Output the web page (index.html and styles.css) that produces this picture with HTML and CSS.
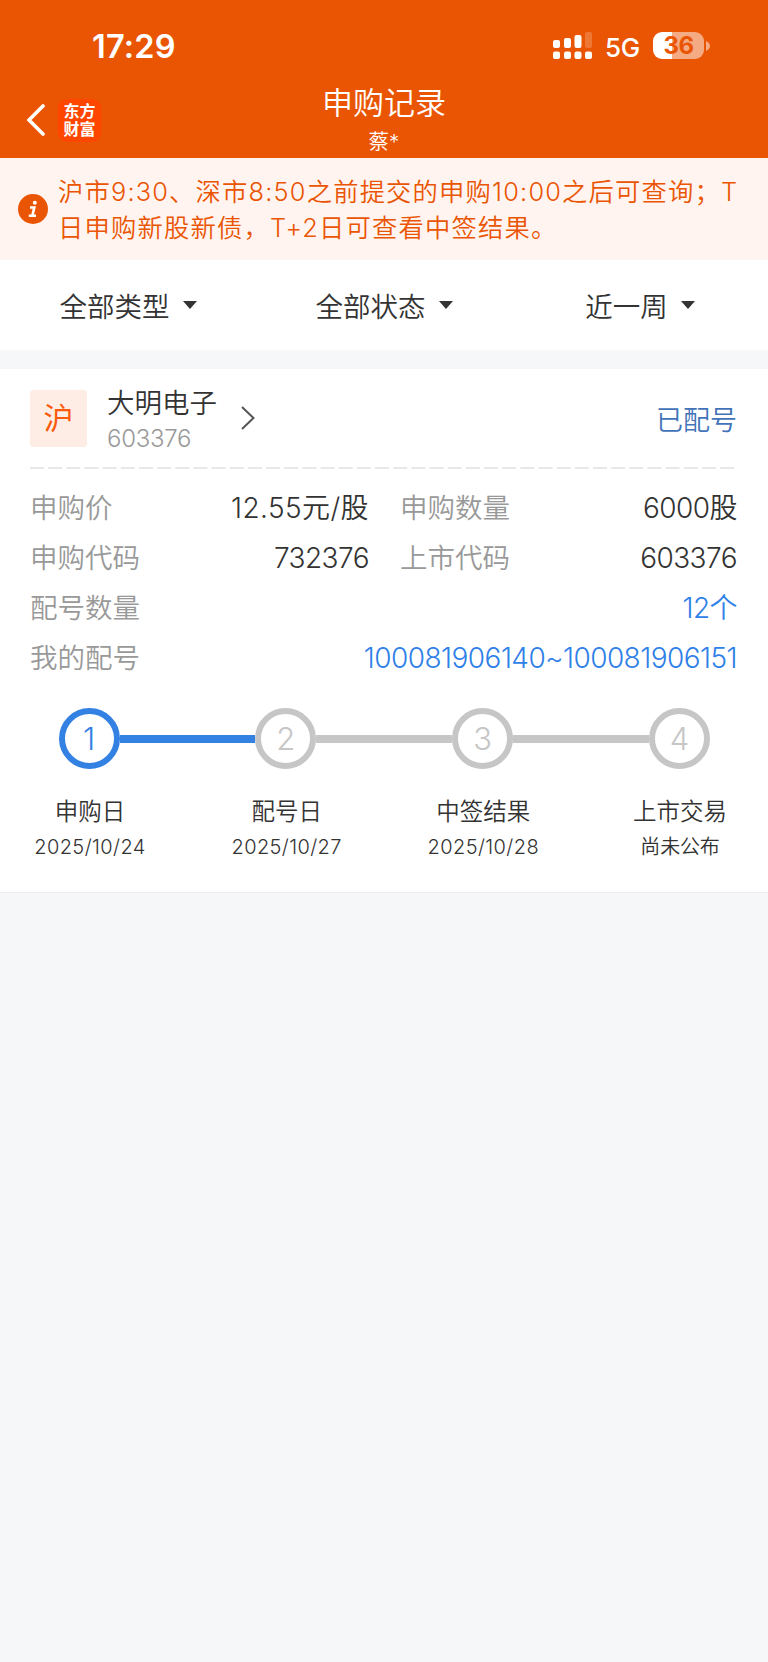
FILE: index.html
```html
<!DOCTYPE html>
<html lang="zh-CN">
<head>
  <meta charset="UTF-8" />
  <meta name="viewport" content="width=device-width, initial-scale=1.0"/>
  <title>申购记录</title>
  <link rel="stylesheet" href="styles.css">
</head>
<body>

  <header class="header">
    <div class="status-bar">
      <span class="clock">17:29</span>
      <div class="status-icons">
        <svg class="signal" width="40" height="28" viewBox="0 0 40 28" fill="#fff">
          <rect x="0" y="8" width="7" height="8" rx="2"/>
          <rect x="11" y="6" width="7" height="10" rx="2"/>
          <rect x="21.5" y="3" width="7" height="13" rx="2"/>
          <rect x="32" y="0" width="7" height="16" rx="2" opacity="0.2"/>
          <rect x="0" y="19.5" width="7" height="7.5" rx="2"/>
          <rect x="11" y="19.5" width="7" height="7.5" rx="2"/>
          <rect x="21.5" y="19.5" width="7" height="7.5" rx="2"/>
          <rect x="32" y="19.5" width="7" height="7.5" rx="2"/>
        </svg>
        <span class="network">5G</span>
        <div class="battery"><span>36</span></div>
        <svg class="battery-tip" width="4" height="10" viewBox="0 0 4 10" fill="#fff" opacity="0.5"><path d="M0 0 Q4 2 4 5 Q4 8 0 10Z"/></svg>
      </div>
    </div>
    <div class="nav">
      <div class="nav-left">
        <svg width="18" height="32" viewBox="0 0 18 32" fill="none" stroke="#fff" stroke-width="3.6" stroke-linecap="round"><path d="M16 2 L2 16 L16 30"/></svg>
        <div class="logo">东方<br>财富</div>
      </div>
      <div class="nav-title">
        <h1>申购记录</h1>
        <p>蔡*</p>
      </div>
    </div>
  </header>

  <div class="notice">
    <svg class="info" width="30" height="30" viewBox="0 0 30 30">
      <circle cx="15" cy="15" r="15" fill="#ea5504"/>
      <circle cx="16.8" cy="8.8" r="2" fill="#fff"/>
      <path d="M12 13.5 H16.3 L14.3 21.7 M10.8 21.7 H18" fill="none" stroke="#fff" stroke-width="2.6"/>
    </svg>
    <p>沪市9:30、深市8:50之前提交的申购10:00之后可查询；T<br>日申购新股新债，T+2日可查看中签结果。</p>
  </div>

  <div class="filters">
    <div class="filter">全部类型<i class="caret"></i></div>
    <div class="filter">全部状态<i class="caret"></i></div>
    <div class="filter">近一周<i class="caret"></i></div>
  </div>

  <main class="card">
    <div class="stock">
      <div class="market">沪</div>
      <div class="stock-name">
        <h2>大明电子</h2>
        <p>603376</p>
      </div>
      <svg class="arrow" width="14" height="24" viewBox="0 0 14 24" fill="none" stroke="#555" stroke-width="2"><path d="M1 1 L12.5 12 L1 23"/></svg>
      <span class="state">已配号</span>
    </div>

    <svg class="divider" width="706" height="2"><line x1="0" y1="1" x2="706" y2="1" stroke="#e8e8e8" stroke-width="2" stroke-dasharray="14 4.16"/></svg>

    <div class="details">
      <div class="cell"><span class="label">申购价</span><span class="value price">12.55元/股</span></div>
      <div class="cell"><span class="label">申购数量</span><span class="value">6000股</span></div>
      <div class="cell"><span class="label">申购代码</span><span class="value">732376</span></div>
      <div class="cell"><span class="label">上市代码</span><span class="value">603376</span></div>
      <div class="cell wide"><span class="label">配号数量</span><span class="value blue">12个</span></div>
      <div class="cell wide"><span class="label">我的配号</span><span class="value blue">100081906140~100081906151</span></div>
    </div>

    <div class="steps">
      <span class="dot active">1</span>
      <span class="line active"></span>
      <span class="dot">2</span>
      <span class="line"></span>
      <span class="dot">3</span>
      <span class="line"></span>
      <span class="dot">4</span>
    </div>
    <div class="step-labels">
      <div class="step-label"><h3>申购日</h3><p>2025/10/24</p></div>
      <div class="step-label"><h3>配号日</h3><p>2025/10/27</p></div>
      <div class="step-label"><h3>中签结果</h3><p>2025/10/28</p></div>
      <div class="step-label"><h3>上市交易</h3><p class="pending">尚未公布</p></div>
    </div>
  </main>

</body>
</html>
```
FILE: styles.css
```css
* {
  box-sizing: border-box;
}

body {
  margin: 0;
  min-height: 100vh;
  background: #f6f7f9;
  color: #333;
  font-family: Inter, "Noto Sans CJK SC", sans-serif;
  font-weight: 350;
}

h1, h2, h3, p {
  margin: 0;
  font-weight: inherit;
}

svg {
  display: block;
  flex-shrink: 0;
}

.header {
  height: 158px;
  background: #ea5504;
  color: #fff;
}

.status-bar {
  height: 82px;
  padding: 11px 58px 0 92px;
  display: flex;
  align-items: center;
  justify-content: space-between;
}

.clock {
  font-size: 32.5px;
  font-weight: 600;
  line-height: 40px;
  letter-spacing: 0.2px;
}

.status-icons {
  display: flex;
  align-items: center;
  margin-top: -11px;
}

.signal {
  margin-top: 10px;
}

.network {
  margin: 13px 0 0 12px;
  width: 48px;
  font-size: 26px;
  font-weight: 450;
  line-height: 30px;
  letter-spacing: -0.2px;
}

.battery {
  width: 51px;
  height: 27px;
  margin-top: 9px;
  border-radius: 9px;
  background: linear-gradient(to right, #fff 19px, rgba(255, 255, 255, 0.5) 19px);
  color: #ea5504;
  font-size: 24px;
  font-weight: 700;
  line-height: 27px;
  text-align: center;
  letter-spacing: -0.5px;
}

.battery-tip {
  margin: 9px 0 0 2px;
}

.nav {
  display: grid;
  grid-template-columns: 1fr 200px 1fr;
  height: 76px;
}

.nav-left {
  display: flex;
  align-items: center;
  gap: 13px;
  padding: 0 0 2px 27px;
}

.logo {
  width: 43px;
  height: 43px;
  padding-top: 3px;
  border-radius: 9px;
  background: #ff4600;
  font-size: 16px;
  font-weight: 700;
  line-height: 18px;
  text-align: center;
}

.nav-title {
  padding-top: 1px;
  text-align: center;
}

.nav-title h1 {
  font-size: 31px;
  line-height: 40px;
}

.nav-title p {
  font-size: 20.5px;
  line-height: 37px;
}

.notice {
  height: 102px;
  padding-left: 18px;
  display: flex;
  align-items: center;
  gap: 10px;
  background: #fff4ef;
  color: #ea5504;
}

.notice p {
  padding-top: 1px;
  font-size: 25.3px;
  line-height: 36px;
  letter-spacing: 1.2px;
  white-space: nowrap;
}

.filters {
  height: 90px;
  padding-bottom: 1px;
  display: grid;
  grid-template-columns: repeat(3, 1fr);
  background: #fff;
}

.filter {
  display: flex;
  align-items: center;
  justify-content: center;
  gap: 13px;
  font-size: 27.5px;
}

.caret {
  border: 7px solid transparent;
  border-top: 8px solid #333;
  border-bottom: 0;
}

.card {
  height: 524px;
  margin-top: 19px;
  padding: 0 32px 0 30px;
  background: #fff;
  border-bottom: 1px solid #ececee;
}

.stock {
  height: 98px;
  display: flex;
  align-items: center;
}

.market {
  width: 57px;
  height: 57px;
  border-radius: 3px;
  background: #fdede5;
  color: #fa5a0a;
  font-size: 30px;
  font-weight: 400;
  line-height: 56px;
  text-align: center;
}

.stock-name {
  padding-top: 4px;
  margin-left: 20px;
  width: 114px;
}

.stock-name h2 {
  font-size: 27.5px;
  line-height: 36px;
  white-space: nowrap;
}

.stock-name p {
  color: #999;
  font-size: 24px;
  line-height: 35px;
  letter-spacing: -0.3px;
}

.arrow {
  margin-left: 20px;
}

.state {
  margin-right: -1px;
  margin-left: auto;
  color: #4273b8;
  font-size: 27px;
}

.details {
  padding-top: 14px;
  display: grid;
  grid-template-columns: 339px 337px;
  column-gap: 31px;
  grid-auto-rows: 50px;
}

.cell {
  display: flex;
  align-items: baseline;
  justify-content: space-between;
  font-size: 27.5px;
  line-height: 50px;
}

.wide {
  grid-column: 1 / 3;
}

.label {
  color: #999;
}

.value {
  font-size: 28px;
  letter-spacing: -0.55px;
}

.price {
  letter-spacing: 0.4px;
}

.blue {
  color: #2f80e7;
}

.steps {
  margin: 25px 26px 0 28.5px;
  display: flex;
  align-items: center;
}

.dot {
  width: 61px;
  height: 61px;
  border: 6px solid #c6c6c6;
  border-radius: 50%;
  color: #c6c6c6;
  font-size: 31px;
  font-weight: 300;
  line-height: 49px;
  text-align: center;
}

.line {
  flex: 1;
  height: 8px;
  background: #c6c6c6;
}

.dot.active {
  border-color: #3381e3;
  color: #3381e3;
}

.line.active {
  background: #3381e3;
}

.step-labels {
  margin: 25px -3px 0 1px;
  display: flex;
  justify-content: space-between;
}

.step-label {
  width: 118px;
  text-align: center;
  white-space: nowrap;
}

.step-label h3 {
  font-size: 23.5px;
  line-height: 36px;
}

.step-label p {
  font-size: 20px;
  line-height: 34px;
  letter-spacing: 0.4px;
}

.step-label .pending {
  letter-spacing: -0.2px;
}
```
